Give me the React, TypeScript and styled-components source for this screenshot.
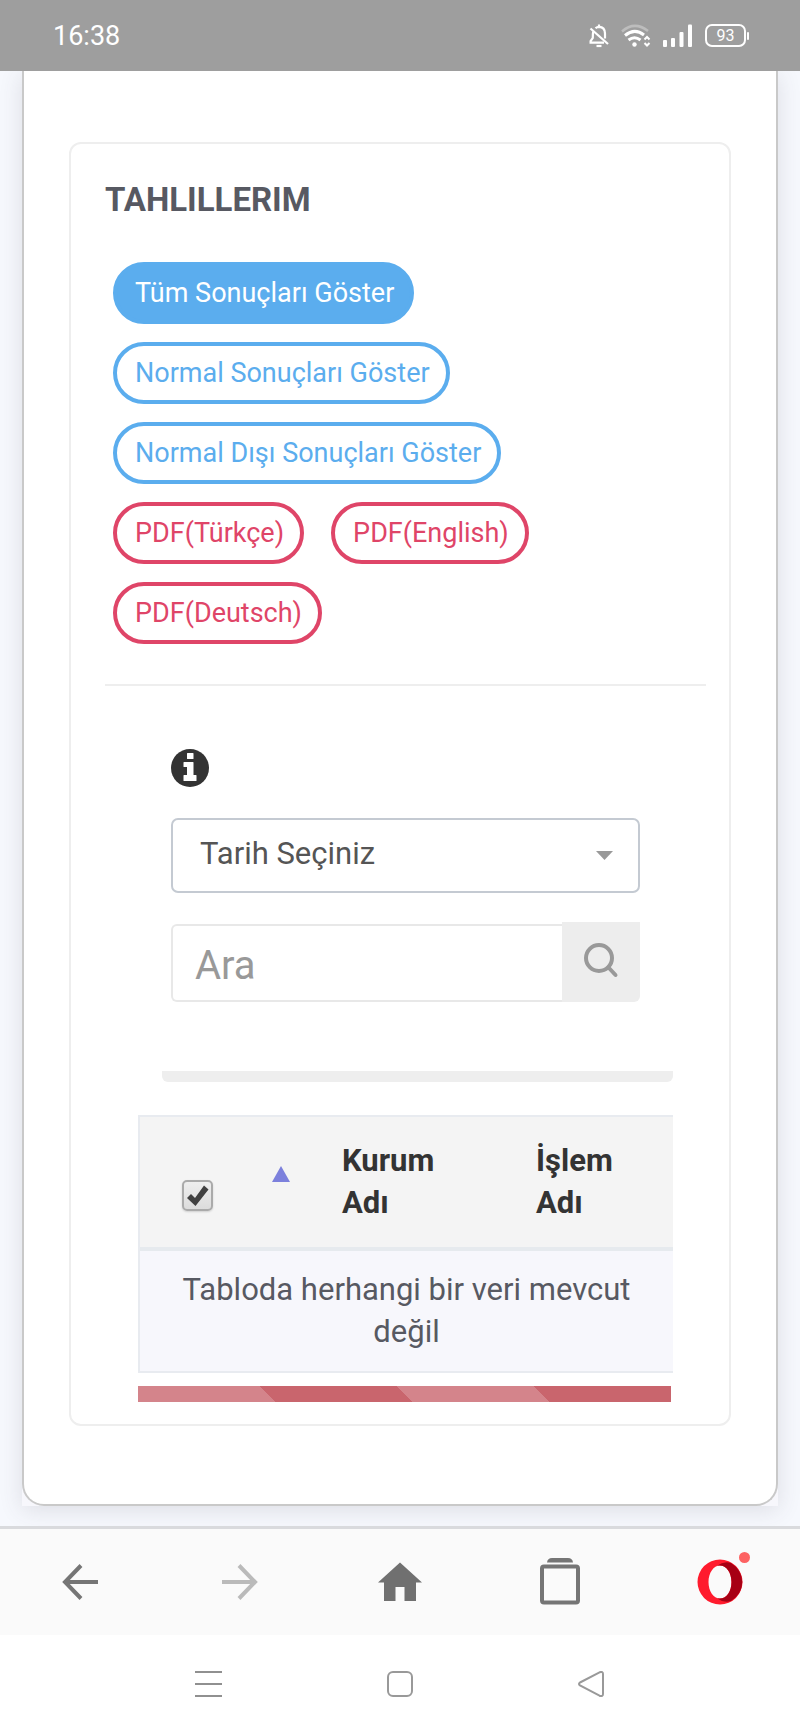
import React from "react";
import styled, { createGlobalStyle } from "styled-components";

const GlobalStyle = createGlobalStyle`
  *, *::before, *::after { box-sizing: border-box; }
  body {
    margin: 0;
    background: #fff;
    color: #575962;
    font-family: Roboto, "Liberation Sans", sans-serif;
  }
  button, input, select { font-family: inherit; }
  svg { display: block; }
`;

const StatusBar = styled.header`
  display: flex;
  align-items: center;
  justify-content: space-between;
  height: 71px;
  padding: 0 51px 0 53px;
  background: #9e9e9e;
  color: #fff;
`;

const Clock = styled.time`
  font-size: 27px;
  line-height: 32px;
`;

const StatusIcons = styled.div`
  display: flex;
  align-items: center;
  gap: 12px;
`;

const Battery = styled.div`
  position: relative;
  display: flex;
  align-items: center;
  justify-content: center;
  width: 41px;
  height: 23px;
  margin: 0 3px 0 1px;
  border: 2px solid #fff;
  border-radius: 7px;
  font-size: 16px;
  line-height: 18px;

  &::after {
    content: "";
    position: absolute;
    top: 6px;
    right: -5px;
    width: 2px;
    height: 8px;
    border-radius: 1px;
    background: #fff;
  }
`;

const Page = styled.main`
  overflow: hidden;
  padding: 0 22px 20px;
  background: #f6f8fd;
`;

const Sheet = styled.div`
  background: #f7f7fc;
  box-shadow: 0 4px 22px rgba(69, 65, 78, 0.14);
`;

const SheetInner = styled.div`
  padding: 71px 45px 78px;
  border: 2px solid #c9c9c9;
  border-top: 0;
  border-radius: 0 0 22px 22px;
  background: #fff;
`;

const Panel = styled.section`
  padding: 36px 23px 22px 34px;
  border: 2px solid #eee;
  border-radius: 12px;
`;

const Title = styled.h1`
  margin: 0;
  font-size: 33px;
  font-weight: 700;
  line-height: 40px;
`;

const Actions = styled.div`
  display: flex;
  flex-wrap: wrap;
  gap: 18px 27px;
  max-width: 440px;
  margin-top: 42px;
  padding-left: 8px;
`;

const Pill = styled.button<{ $tone: string; $filled?: boolean }>`
  height: 62px;
  padding: 0 16px 0 18px;
  border: 4px solid ${(p) => p.$tone};
  border-radius: 31px;
  background: ${(p) => (p.$filled ? p.$tone : "#fff")};
  color: ${(p) => (p.$filled ? "#fff" : p.$tone)};
  font-size: 27px;
  line-height: 32px;
  white-space: nowrap;
  cursor: pointer;
`;

const Divider = styled.hr`
  height: 2px;
  margin: 40px 0 0;
  border: 0;
  background: #eee;
`;

const Filters = styled.div`
  padding: 63px 66px 0;
`;

const InfoButton = styled.button`
  display: block;
  padding: 0;
  border: 0;
  background: none;
  cursor: pointer;
`;

const SelectBox = styled.div`
  position: relative;
  margin-top: 31px;

  svg {
    position: absolute;
    top: 33px;
    right: 27px;
    pointer-events: none;
  }
`;

const Select = styled.select`
  display: block;
  width: 100%;
  height: 75px;
  padding: 0 60px 4px 27px;
  border: 2px solid #c4cad2;
  border-radius: 7px;
  background: #fff;
  color: #555;
  font-size: 31px;
  appearance: none;
`;

const SearchRow = styled.div`
  display: flex;
  align-items: flex-end;
  height: 80px;
  margin-top: 29px;
`;

const SearchInput = styled.input`
  flex: 1;
  min-width: 0;
  height: 78px;
  padding: 4px 22px 0;
  border: 2px solid #e8e8e8;
  border-right: 0;
  border-radius: 6px 0 0 6px;
  background: #fff;
  color: #555;
  font-size: 40px;

  &::placeholder {
    color: #999;
    opacity: 1;
  }
`;

const SearchButton = styled.button`
  display: flex;
  justify-content: center;
  width: 78px;
  height: 80px;
  padding: 20px 0 0;
  border: 0;
  border-radius: 0 0 6px 0;
  background: #ededed;
  cursor: pointer;
`;

const Results = styled.div`
  padding: 69px 33px 0;
`;

const Strip = styled.div`
  height: 11px;
  margin-left: 24px;
  border-radius: 0 0 6px 6px;
  background: #eee;
`;

const TableScroll = styled.div`
  overflow: hidden;
  margin-top: 33px;
`;

const Table = styled.table`
  width: 100%;
  border: 2px solid #e8ebf0;
  border-right: 0;
  border-spacing: 0;
  table-layout: fixed;
  font-size: 31px;
  line-height: 42px;
`;

const HeadCell = styled.th<{ $width?: number }>`
  width: ${(p) => (p.$width ? `${p.$width}px` : "auto")};
  padding: 23px 40px 23px 20px;
  border-bottom: 4px solid #e6eaee;
  background: #f4f4f4;
  color: #333;
  font-weight: 700;
  text-align: left;
  vertical-align: top;
`;

const CheckCell = styled(HeadCell)`
  padding: 63px 0 0 42px;
`;

const SortCell = styled(HeadCell)`
  padding: 49px 0 0 22px;
`;

const EmptyCell = styled.td`
  padding: 18px 20px;
  background: #f7f7fc;
  text-align: center;
`;

const CheckBox = styled.span`
  position: relative;
  display: block;
  width: 31px;
  height: 31px;

  svg {
    position: absolute;
    inset: 0;
    pointer-events: none;
  }

  input:not(:checked) + svg {
    display: none;
  }
`;

const CheckInput = styled.input`
  display: block;
  width: 31px;
  height: 31px;
  margin: 0;
  border: 2px solid #aaa;
  border-radius: 5px;
  background: linear-gradient(#eee, #dcdcdc);
  box-shadow: 0 1px 2px rgba(0, 0, 0, 0.15);
  appearance: none;
`;

const SortButton = styled.button`
  display: block;
  padding: 0;
  border: 0;
  background: none;
  cursor: pointer;
`;

const StripedBar = styled.div`
  height: 16px;
  margin: 13px 2px 0 0;
  background: repeating-linear-gradient(
    45deg,
    #d4848b 0 97px,
    #c9656d 97px 194px
  );
`;

const Toolbar = styled.nav`
  display: grid;
  grid-template-columns: repeat(5, 1fr);
  height: 109px;
  border-top: 3px solid #d9dadd;
  background: #fafafa;
`;

const SystemNav = styled.nav`
  display: grid;
  grid-template-columns: repeat(3, 1fr);
  height: 98px;
  padding: 0 14%;
  background: #fff;
`;

const BarButton = styled.button`
  display: flex;
  align-items: center;
  justify-content: center;
  padding: 0;
  border: 0;
  background: none;
  cursor: pointer;
`;

const BLUE = "#5badee";
const RED = "#df4568";

const actions = [
  { label: "Tüm Sonuçları Göster", tone: BLUE, filled: true },
  { label: "Normal Sonuçları Göster", tone: BLUE },
  { label: "Normal Dışı Sonuçları Göster", tone: BLUE },
  { label: "PDF(Türkçe)", tone: RED },
  { label: "PDF(English)", tone: RED },
  { label: "PDF(Deutsch)", tone: RED },
];

const BellOffIcon = () => (
  <svg width="20" height="24" viewBox="0 0 20 24" fill="none" stroke="#fff" strokeWidth="2.2">
    <path d="M6.5 4.2Q8 2.8 10 2.8Q16 3 16 9.5V14.5" />
    <path d="M10 0.5V3" />
    <path d="M4.2 7.5Q3.8 9 3.8 14L1.6 17V18.6H15" />
    <path d="M1.5 4.5L19 20" />
    <path d="M7.5 22H12.5" />
  </svg>
);

const WifiIcon = () => (
  <svg width="30" height="24" viewBox="0 0 30 24" fill="none" stroke="#fff" strokeWidth="3">
    <path d="M1 7.5Q13.5 -3.5 27 7" stroke="#bdbdbd" strokeWidth="2.5" />
    <path d="M4 11.5Q13.5 3.5 23 11" />
    <path d="M7.5 16Q13.5 11.5 19.5 16" />
    <circle cx="13.5" cy="20.5" r="2.2" fill="#fff" stroke="none" />
    <path d="M23.5 15.5L26 13L28.500 15.5M23.5 19L26 21.5L28.500 19" strokeWidth="2" />
  </svg>
);

const SignalIcon = () => (
  <svg width="29" height="24" viewBox="0 0 29 24" fill="#fff">
    <rect x="0" y="16" width="4" height="7" rx="1" />
    <rect x="8" y="14" width="4" height="9" rx="1" />
    <rect x="16.5" y="8" width="4" height="15" rx="1" />
    <rect x="25" y="0.5" width="4" height="22.5" rx="1" />
  </svg>
);

const InfoIcon = () => (
  <svg width="38" height="38" viewBox="0 0 38 38">
    <circle cx="19" cy="19" r="19" fill="#333" />
    <path
      fill="#fff"
      d="M16.5 4H22Q22.500 4 22.500 4.500V9.500Q22.500 10 22 10H16.500Q16 10 16 9.500V4.500Q16 4 16.500 4ZM13 13H22Q22.500 13 22.500 13.500V26H25Q25.500 26 25.500 26.500V31.500Q25.500 32 25 32H13Q12.500 32 12.500 31.500V26.500Q12.500 26 13 26H16V18H13Q12.500 18 12.500 17.500V13.500Q12.500 13 13 13Z"
    />
  </svg>
);

const SearchIcon = () => (
  <svg width="36" height="36" viewBox="0 0 36 36" fill="none" stroke="#999" strokeWidth="4">
    <circle cx="16" cy="16" r="13" />
    <path d="M25.5 25.5L32.500 33" strokeLinecap="round" />
  </svg>
);

const BackIcon = () => (
  <svg width="36" height="36" viewBox="0 0 36 36" fill="none" stroke="#757575" strokeWidth="4">
    <path d="M19 1.5L3 18L19 34.500M3 18H36" />
  </svg>
);

const ForwardIcon = () => (
  <svg width="36" height="36" viewBox="0 0 36 36" fill="none" stroke="#bababa" strokeWidth="4">
    <path d="M17 1.5L33 18L17 34.500M33 18H0" />
  </svg>
);

const HomeIcon = () => (
  <svg width="44" height="40" viewBox="0 0 44 40" fill="#707070">
    <path d="M22 0.5L44 20.5H38V39H26.5V25H17.5V39H6V20.5H0Z" />
  </svg>
);

const TabsIcon = () => (
  <svg width="40" height="48" viewBox="0 0 40 48">
    <path d="M7 4.500Q7.500 0 12 0H28Q32.500 0 33 4.500Z" fill="#757575" />
    <rect x="2" y="8.500" width="36" height="36" rx="2" fill="none" stroke="#757575" strokeWidth="4" />
  </svg>
);

const OperaIcon = () => (
  <svg width="56" height="56" viewBox="0 0 56 56">
    <path
      fillRule="evenodd"
      fill="#ff1b2d"
      d="M28 5.500A22.300 22.300 0 1 0 28 50.500A22.300 22.300 0 1 0 28 5.500ZM28 11.500C34.500 11.500 39.500 19 39.500 28S34.500 44.500 28 44.500S16.500 37 16.500 28S21.500 11.500 28 11.500Z"
    />
    <path
      fill="#a70014"
      d="M25 11.800Q32 6.500 39 9Q50 16 50.300 28Q50 40 39 47Q32 49.500 25 44.200C33 46.500 39.500 39 39.500 28S33 9.500 25 11.800Z"
    />
  </svg>
);

const OperaMark = styled.span`
  position: relative;
  display: block;

  &::after {
    content: "";
    position: absolute;
    top: -2px;
    right: -2px;
    width: 11px;
    height: 11px;
    border-radius: 50%;
    background: #fd6262;
  }
`;

const MenuIcon = () => (
  <svg width="27" height="27" viewBox="0 0 27 27" stroke="#909090" strokeWidth="2">
    <path d="M0 1H27M0 13H27M0 25H27" />
  </svg>
);

const SquareIcon = () => (
  <svg width="26" height="26" viewBox="0 0 26 26" fill="none" stroke="#999" strokeWidth="2">
    <rect x="1" y="1" width="24" height="24" rx="5" />
  </svg>
);

const TriangleIcon = () => (
  <svg width="28" height="26" viewBox="0 0 28 26" fill="none" stroke="#999" strokeWidth="2">
    <path d="M2 11.500L21.500 1.300Q25 0 25 3V23Q25 26 21.500 24.700L2 14.500Q0 13 2 11.500Z" />
  </svg>
);

export default function App() {
  return (
    <>
      <GlobalStyle />
      <StatusBar>
        <Clock>16:38</Clock>
        <StatusIcons>
          <BellOffIcon />
          <WifiIcon />
          <SignalIcon />
          <Battery>93</Battery>
        </StatusIcons>
      </StatusBar>

      <Page>
        <Sheet>
          <SheetInner>
            <Panel>
              <Title>TAHLILLERIM</Title>
              <Actions>
                {actions.map((a) => (
                  <Pill key={a.label} type="button" $tone={a.tone} $filled={a.filled}>
                    {a.label}
                  </Pill>
                ))}
              </Actions>
              <Divider />

              <Filters>
                <InfoButton type="button" aria-label="Bilgi">
                  <InfoIcon />
                </InfoButton>
                <SelectBox>
                  <Select aria-label="Tarih Seçiniz" defaultValue="">
                    <option value="">Tarih Seçiniz</option>
                  </Select>
                  <svg width="17" height="9" viewBox="0 0 17 9" fill="#999">
                    <path d="M0 0H17L8.5 9Z" />
                  </svg>
                </SelectBox>
                <SearchRow>
                  <SearchInput type="text" placeholder="Ara" aria-label="Ara" />
                  <SearchButton type="button" aria-label="Ara">
                    <SearchIcon />
                  </SearchButton>
                </SearchRow>
              </Filters>

              <Results>
                <Strip />
                <TableScroll>
                  <Table>
                    <thead>
                      <tr>
                        <CheckCell $width={110}>
                          <CheckBox>
                            <CheckInput type="checkbox" defaultChecked aria-label="Tümünü seç" />
                            <svg width="31" height="31" viewBox="0 0 31 31" fill="#404040">
                              <path d="M5 18L9 14L13 18L22 5.5L26.5 9.5L13.5 26Z" />
                            </svg>
                          </CheckBox>
                        </CheckCell>
                        <SortCell $width={72}>
                          <SortButton type="button" aria-label="Sırala">
                            <svg width="18" height="16" viewBox="0 0 18 16" fill="#7c80dc">
                              <path d="M9 0L18 16H0Z" />
                            </svg>
                          </SortButton>
                        </SortCell>
                        <HeadCell $width={194}>Kurum Adı</HeadCell>
                        <HeadCell>İşlem Adı</HeadCell>
                      </tr>
                    </thead>
                    <tbody>
                      <tr>
                        <EmptyCell colSpan={4}>Tabloda herhangi bir veri mevcut değil</EmptyCell>
                      </tr>
                    </tbody>
                  </Table>
                </TableScroll>
                <StripedBar />
              </Results>
            </Panel>
          </SheetInner>
        </Sheet>
      </Page>

      <Toolbar aria-label="Tarayıcı">
        <BarButton type="button" aria-label="Geri">
          <BackIcon />
        </BarButton>
        <BarButton type="button" aria-label="İleri">
          <ForwardIcon />
        </BarButton>
        <BarButton type="button" aria-label="Ana sayfa">
          <HomeIcon />
        </BarButton>
        <BarButton type="button" aria-label="Sekmeler">
          <TabsIcon />
        </BarButton>
        <BarButton type="button" aria-label="Opera">
          <OperaMark>
            <OperaIcon />
          </OperaMark>
        </BarButton>
      </Toolbar>

      <SystemNav aria-label="Sistem">
        <BarButton type="button" aria-label="Menü">
          <MenuIcon />
        </BarButton>
        <BarButton type="button" aria-label="Giriş">
          <SquareIcon />
        </BarButton>
        <BarButton type="button" aria-label="Geri dön">
          <TriangleIcon />
        </BarButton>
      </SystemNav>
    </>
  );
}
